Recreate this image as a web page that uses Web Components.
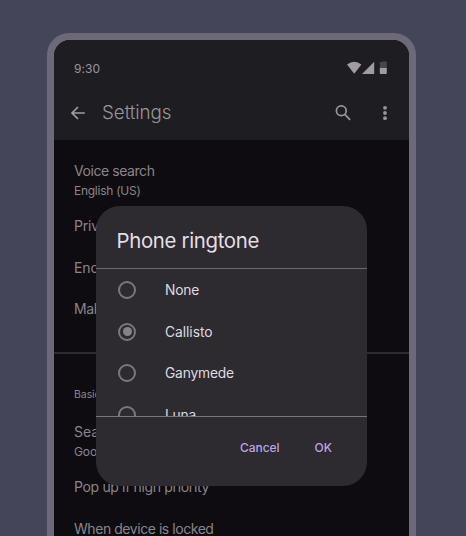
<!DOCTYPE html>
<html lang="en">
<head>
<meta charset="utf-8">
<title>Settings</title>
<style>
html,body{margin:0;height:536px;overflow:hidden;background:#454559}
body{font-family:Inter,Roboto,"Liberation Sans",sans-serif;display:flow-root}
</style>
</head>
<body>
<phone-frame>
  <app-bar></app-bar>
  <settings-list></settings-list>
  <ringtone-dialog slot="overlay"></ringtone-dialog>
</phone-frame>
<script>
const define = (name, html, setup) => customElements.define(name, class extends HTMLElement {
  constructor(){
    super();
    this.attachShadow({mode:'open'}).innerHTML = html;
  }
  connectedCallback(){ if (setup) setup(this); }
});

// A single line of text whose tracking is adjusted to fill the given width.
define('fit-text', `<style>:host{display:block;white-space:nowrap}span{display:inline-block}</style><span><slot></slot></span>`, el => {
  const w = +el.getAttribute('w');
  if (!w) return;
  const span = el.shadowRoot.querySelector('span');
  const n = el.textContent.length;
  span.style.letterSpacing = ((w - span.getBoundingClientRect().width) / n) + 'px';
});

define('phone-frame', `<style>
:host{display:block;box-sizing:border-box;position:relative;width:369px;height:503px;margin:33px 0 0 47px;padding:7px 7px 0;background:#6d687a;border-radius:22px 22px 0 0}
.screen{height:496px;overflow:hidden;border-radius:16px 16px 0 0;background:#0e0c11}
.over{position:absolute;left:49px;top:173px}
</style><div class="screen"><slot></slot></div><div class="over"><slot name="overlay"></slot></div>`);

define('status-icons', `<style>:host{display:block;width:40px;height:14px}svg{display:block}</style>
<svg width="40" height="14" viewBox="0 0 40 14"><path d="M0 3.4Q7.2-1.8 14.4 3.4L7.2 12.8Z" fill="#a19ca3"/><path d="M27.2.8V13H15Z" fill="#a19ca3"/><path d="M34.6 1.1h1.5V.3h2.6v.8h1.1v6h-7v-6z" fill="#49454b"/><path d="M32.8 7h7v5q0 1-1 1h-5q-1 0-1-1z" fill="#a19ca3"/></svg>`);

define('app-bar', `<style>
:host{display:block;height:100px;background:#1e1d21;color:#99959c}
.status{display:flex;justify-content:space-between;height:56px;align-items:center;padding:0 22px 0 20px;box-sizing:border-box;font-size:12px;font-weight:400}
.bar{display:flex;align-items:center;height:33px}
.back{margin-left:16px;width:16px;height:16px}
.title{font-size:18.8px;margin-left:16px;line-height:30px;font-weight:350}
.search{margin-left:auto;width:18px;height:18px}
.more{width:6px;height:18px;margin:0 21px 0 30px}
svg{display:block}
</style>
<div class="status"><fit-text w="26">9:30</fit-text><status-icons></status-icons></div>
<div class="bar">
<svg class="back" viewBox="0 0 16 16" fill="none" stroke="#a19ca3" stroke-width="1.7"><path d="M14.8 8H2.4M8 2 2 8 8 14"/></svg>
<fit-text class="title" w="69.5">Settings</fit-text>
<svg class="search" viewBox="0 0 18 18" fill="none" stroke="#99959c" stroke-width="1.7"><circle cx="7.3" cy="6.8" r="4.9"/><path d="m10.8 10.3 5.3 5.5"/></svg>
<svg class="more" viewBox="0 0 6 18" fill="#99959c"><circle cx="3" cy="3.8" r="1.9"/><circle cx="3" cy="9" r="1.9"/><circle cx="3" cy="14.2" r="1.9"/></svg>
</div>`);

define('settings-list', `<style>
:host{display:block;color:#89858b;font-size:14px;line-height:20px}
.group{padding-left:20px;display:flex;flex-direction:column}
.a{padding-top:21px;height:191px}
.b{border-top:2px solid #2d2b30;padding-top:32px}
.sub{font-size:12px;line-height:18px;padding-top:1px}
.a .g1{margin-top:16px}
.a .gap{margin-top:22px}
.a .gap ~ .gap{margin-top:21px}
.head{font-size:10.5px;line-height:18px;margin-bottom:18px}
.b .g1{margin-top:16px}
.b .gap{margin-top:22px}
</style>
<div class="group a">
<fit-text w="80.5">Voice search</fit-text><fit-text class="sub" w="66.5">English (US)</fit-text>
<fit-text class="g1" w="47.5">Privacy</fit-text><fit-text class="gap" w="70">Encryption</fit-text><fit-text class="gap" w="34.5">Make</fit-text>
</div>
<div class="group b">
<fit-text class="head" w="32">Basics</fit-text>
<fit-text w="46.5">Search</fit-text><fit-text class="sub" w="40">Google</fit-text>
<fit-text class="g1" w="135">Pop up if high priority</fit-text><fit-text class="gap" w="139.5">When device is locked</fit-text>
</div>`);

define('radio-option', `<style>
:host{display:flex;align-items:center;height:41.4px;padding-left:22px;gap:29px;color:#dedae0;font-size:13.8px}
i{display:flex;box-sizing:border-box;width:18px;height:18px;border:2px solid #7b777d;border-radius:50%;align-items:center;justify-content:center}
:host([checked]) i::after{content:"";width:9px;height:9px;border-radius:50%;background:#878289}
::slotted(fit-text){line-height:20px}
</style><i></i><slot></slot>`);

define('ringtone-dialog', `<style>
:host{display:block;width:271px;height:280px;border-radius:24px;overflow:hidden;background:#2d2a30}
.title{box-sizing:border-box;height:62px;padding:20px 0 0 20.5px;line-height:30px;font-size:20.4px;font-weight:370;color:#e3dfe6}
.list{height:149px;box-sizing:border-box;overflow:hidden;border-top:1px solid #6c686f;border-bottom:1px solid #7a767d}
.list radio-option:first-child{margin-top:.7px}
.actions{display:flex;justify-content:flex-end;padding:22px 35px 0 0;gap:35px;line-height:18px;font-size:12px;font-weight:500;color:#b8a5e4}
</style>
<fit-text class="title" w="142.5">Phone ringtone</fit-text>
<div class="list">
<radio-option><fit-text w="34">None</fit-text></radio-option>
<radio-option checked><fit-text w="47.5">Callisto</fit-text></radio-option>
<radio-option><fit-text w="69">Ganymede</fit-text></radio-option>
<radio-option><fit-text w="31">Luna</fit-text></radio-option>
</div>
<div class="actions"><fit-text w="39.5">Cancel</fit-text><fit-text w="17.5">OK</fit-text></div>`);
</script>
</body>
</html>
